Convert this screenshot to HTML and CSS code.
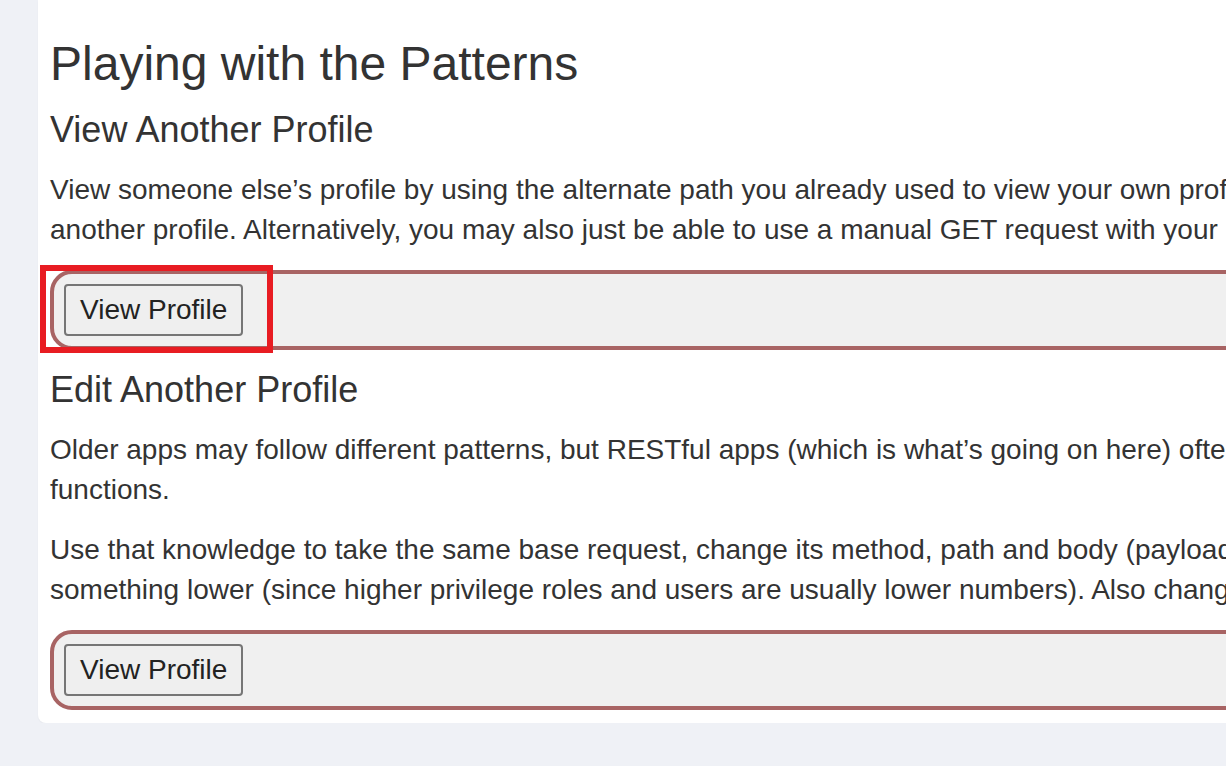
FILE: index.html
```html
<!DOCTYPE html>
<html lang="en">
<head>
<meta charset="utf-8">
<title>Playing with the Patterns</title>
<link rel="stylesheet" href="styles.css">
</head>
<body>
<div class="page">
  <main class="card">
    <h1 class="title">Playing with the Patterns</h1>

    <h2 class="subtitle">View Another Profile</h2>
    <p class="text">View someone else’s profile by using the alternate path you already used to view your own profile, swapping the ID to view<br>another profile. Alternatively, you may also just be able to use a manual GET request with your browser.</p>
    <div class="action-box">
      <button class="btn" type="button">View Profile</button>
      <span class="highlight-frame" aria-hidden="true"></span>
    </div>

    <h2 class="subtitle">Edit Another Profile</h2>
    <p class="text">Older apps may follow different patterns, but RESTful apps (which is what’s going on here) often use the same path for different<br>functions.</p>
    <p class="text">Use that knowledge to take the same base request, change its method, path and body (payload), and set the ID to<br>something lower (since higher privilege roles and users are usually lower numbers). Also change the role.</p>
    <div class="action-box">
      <button class="btn" type="button">View Profile</button>
    </div>
  </main>
</div>
</body>
</html>
```

FILE: styles.css
```css
html, body {
  margin: 0;
  padding: 0;
  background: #eff1f6;
  overflow: hidden;
}

body {
  font-family: "Liberation Sans", Arial, sans-serif;
  color: #333333;
}

.page {
  padding: 0 0 0 38px;
  width: 1900px;
}

.card {
  background: #ffffff;
  border-radius: 0 0 0 8px;
  padding: 34px 0 13px 12px;
  box-shadow: 0 1px 2px rgba(0, 0, 0, 0.04);
}

.title {
  font-size: 48px;
  font-weight: 400;
  line-height: 60px;
  margin: 0 0 15px 0;
}

.subtitle {
  font-size: 36px;
  font-weight: 400;
  line-height: 42px;
  margin: 0 0 19px 0;
}

.text {
  font-size: 28px;
  line-height: 40px;
  margin: 0 0 20px 0;
  white-space: nowrap;
}

.action-box {
  position: relative;
  display: flex;
  align-items: center;
  background: #f0f0f0;
  border: 4px solid #a86464;
  border-radius: 22px;
  padding: 10px 10px;
  margin: 0 0 19px 0;
}

.action-box:last-child {
  margin-bottom: 0;
}

.btn {
  font-family: "Liberation Sans", Arial, sans-serif;
  font-size: 28px;
  color: #222222;
  background: #efefef;
  border: 2px solid #767676;
  border-radius: 4px;
  height: 52px;
  padding: 0 14px;
  line-height: 1;
}

.highlight-frame {
  position: absolute;
  left: -14px;
  top: -9px;
  width: 233px;
  height: 88px;
  box-sizing: border-box;
  border: 6px solid #e81c22;
  pointer-events: none;
}
```
